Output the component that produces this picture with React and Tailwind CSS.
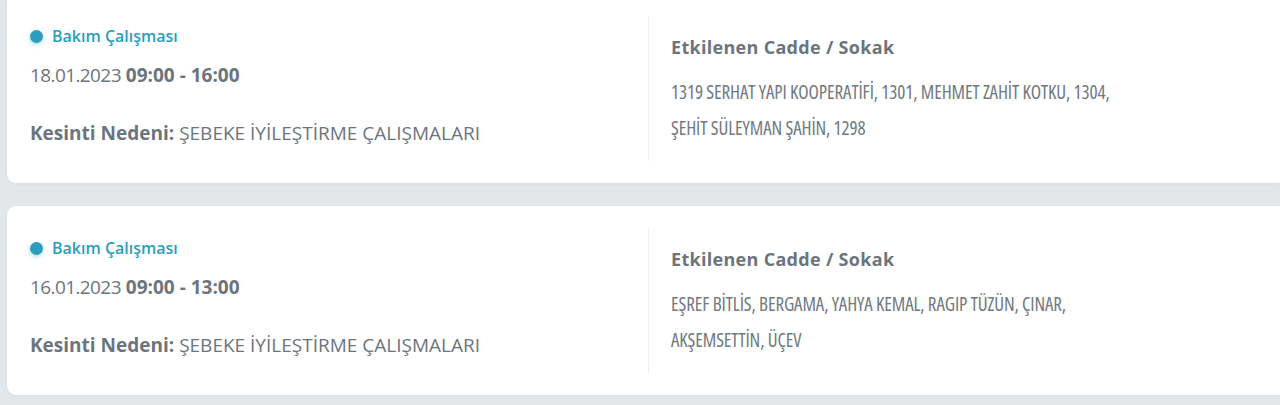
import React from "react";

const outages = [
  {
    id: 1,
    date: "18.01.2023",
    time: "09:00 - 16:00",
    reason: "ŞEBEKE İYİLEŞTİRME ÇALIŞMALARI",
    streets: "1319 SERHAT YAPI KOOPERATİFİ, 1301, MEHMET ZAHİT KOTKU, 1304, ŞEHİT SÜLEYMAN ŞAHİN, 1298",
  },
  {
    id: 2,
    date: "16.01.2023",
    time: "09:00 - 13:00",
    reason: "ŞEBEKE İYİLEŞTİRME ÇALIŞMALARI",
    streets: "EŞREF BİTLİS, BERGAMA, YAHYA KEMAL, RAGIP TÜZÜN, ÇINAR, AKŞEMSETTİN, ÜÇEV",
  },
];

function OutageCard({ item }) {
  return (
    <div className="flex h-[189px] rounded-l-[9px] bg-white py-[22px] pl-[23px] shadow-[0_1px_4px_rgba(0,0,0,0.04)]">
      <div className="w-[618px] shrink-0">
        <div className="mt-[10px] flex h-5 items-center gap-[9px]">
          <span className="h-[13px] w-[13px] rounded-full bg-[#2b9ebd] shadow-[0_2px_5px_rgba(43,158,189,0.35)]" />
          <span className="text-[16px] font-semibold text-[#2b9ebd]">Bakım Çalışması</span>
        </div>
        <p className="mt-[19px] text-[19px] leading-5 text-[#6c757d]">
          <span className="tracking-[-0.6px]">{item.date}</span>{" "}
          <span className="font-bold">{item.time}</span>
        </p>
        <p className="mt-[38px] text-[19px] leading-5 text-[#6c757d]">
          <span className="font-bold">Kesinti Nedeni:</span> {item.reason}
        </p>
      </div>
      <div className="w-[600px] border-l border-[#eef0f2] pl-[22px]">
        <p className="mt-[20px] text-[18px] font-bold leading-[22px] tracking-[0.3px] text-[#6c757d]">
          Etkilenen Cadde / Sokak
        </p>
        <p className="mt-[16px] w-[470px] text-[19px] leading-[36px] tracking-[-0.1px] text-[#6f7981] [font-stretch:75%]">
          {item.streets}
        </p>
      </div>
    </div>
  );
}

export default function App() {
  return (
    <div className="h-[405px] overflow-hidden bg-[#e4e7ea] pl-[7px] font-['Open_Sans',sans-serif]">
      <div className="-mt-[6px] flex flex-col gap-[23px]">
        {outages.map((item) => (
          <OutageCard key={item.id} item={item} />
        ))}
      </div>
    </div>
  );
}
